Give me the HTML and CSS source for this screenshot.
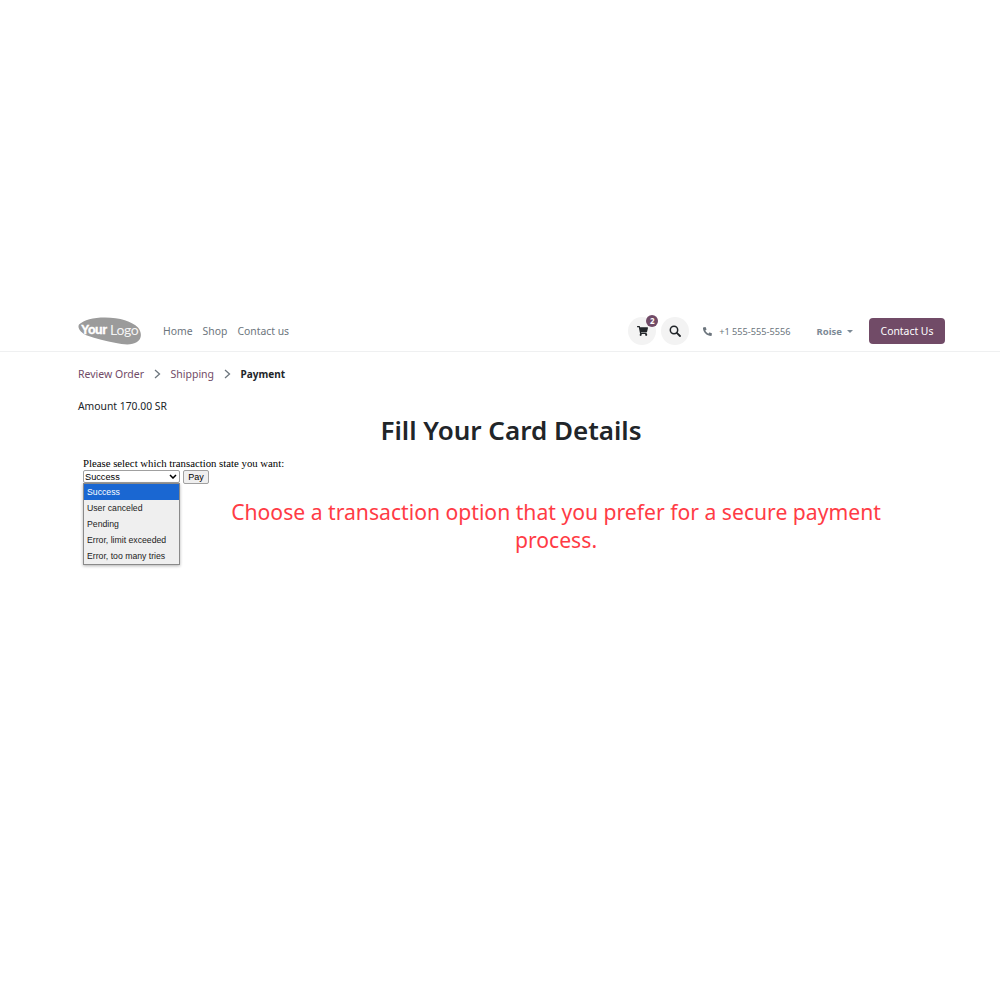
FILE: index.html
```html
<!DOCTYPE html>
<html lang="en">
<head>
<meta charset="utf-8">
<title>Payment</title>
<link rel="stylesheet" href="styles.css">
</head>
<body>
<div class="page">
  <header class="navbar">
    <a class="logo" aria-label="Your Logo">
      <svg width="64" height="28" viewBox="0 0 64 28">
        <path d="M1 7.500C6 3 15 .5 27 .5c15 0 27 4 33 10 4 5 4 11-1 14.500-5 3.500-14 2.500-21 1C28 24 18 22 9 18.500 3 16-1 11 1 7.500z" fill="#9b9b9b"/>
        <text x="3" y="17" class="logo-your">Your</text>
        <text x="32" y="18" class="logo-logo">Logo</text>
      </svg>
    </a>
    <nav class="menu">
      <a>Home</a>
      <a>Shop</a>
      <a>Contact us</a>
    </nav>
    <div class="tools">
      <span class="circle cart">
        <svg width="11" height="10" viewBox="0 0 576 512"><path fill="#212529" d="M528 301l47-208c3-15-8-29-23-29H159l-9-47C148 7 139 0 128 0H24C11 0 0 11 0 24v16c0 13 11 24 24 24h70l70 343c-17 10-28 28-28 49 0 31 25 56 56 56s56-25 56-56c0-16-6-30-17-40h210c-11 10-17 24-17 40 0 31 25 56 56 56s56-25 56-56c0-22-13-41-32-51l5-24c3-15-8-29-23-29H218l-6-32h293c11 0 21-8 23-19z"/></svg>
        <span class="badge">2</span>
      </span>
      <span class="circle">
        <svg width="12" height="12" viewBox="0 0 12 12"><circle cx="5" cy="5" r="3.700" fill="none" stroke="#212529" stroke-width="1.500"/><path d="M7.800 7.800L11 11" stroke="#212529" stroke-width="1.800" stroke-linecap="round"/></svg>
      </span>
      <span class="phone">
        <svg width="9" height="9" viewBox="0 0 512 512"><path transform="matrix(-1 0 0 1 512 0)" fill="#6c757d" d="M493 24L389 0c-11-3-23 3-27 14l-48 112c-4 10-1 21 7 28l61 50c-36 76-98 140-175 176l-50-61c-7-8-18-11-28-7L17 360c-11 5-17 17-14 28l24 104c3 11 12 19 23 19 257 0 466-208 466-466 0-11-8-20-23-21z"/></svg>
        <span>+1 555-555-5556</span>
      </span>
      <span class="user">Roise<i class="caret"></i></span>
      <a class="cta">Contact Us</a>
    </div>
  </header>
  <main class="content">
    <ol class="steps">
      <li class="step-link">Review Order</li>
      <li class="chev"><svg width="7" height="10" viewBox="0 0 7 10"><path d="M1 1l4.500 4L1 9" fill="none" stroke="#6c757d" stroke-width="1.300"/></svg></li>
      <li class="step-link">Shipping</li>
      <li class="chev"><svg width="7" height="10" viewBox="0 0 7 10"><path d="M1 1l4.500 4L1 9" fill="none" stroke="#6c757d" stroke-width="1.300"/></svg></li>
      <li class="step-current">Payment</li>
    </ol>
    <p class="amount">Amount 170.00 SR</p>
    <h1 class="title">Fill Your Card Details</h1>
    <div class="pay-row">
      <form class="mock-form">
        <div class="prompt">Please select which transaction state you want:</div>
        <div class="controls">
          <div class="select-wrap">
            <select class="state-select">
              <option>Success</option>
              <option>User canceled</option>
              <option>Pending</option>
              <option>Error, limit exceeded</option>
              <option>Error, too many tries</option>
            </select>
            <svg class="select-arrow" width="8" height="5" viewBox="0 0 8 5"><path d="M1 1l3 3 3-3" fill="none" stroke="#000" stroke-width="1.500"/></svg>
            <ul class="dropdown">
              <li class="selected">Success</li>
              <li>User canceled</li>
              <li>Pending</li>
              <li>Error, limit exceeded</li>
              <li>Error, too many tries</li>
            </ul>
          </div>
          <button class="pay" type="button">Pay</button>
        </div>
      </form>
      <p class="notice">Choose a transaction option that you prefer for a secure payment process.</p>
    </div>
  </main>
</div>
</body>
</html>
```

FILE: styles.css
```css
* { box-sizing: border-box; }
html, body { margin: 0; padding: 0; background: #fff; }
body { font-family: "Noto Sans", "Open Sans", sans-serif; color: #212529; }
.page { padding-top: 306px; min-height: 1000px; }

.navbar {
  display: flex;
  align-items: center;
  height: 46px;
  padding: 5px 55px 0 78px;
  border-bottom: 1px solid #eff0f1;
}
.logo { display: flex; width: 64px; height: 28px; }
.logo-your { font: 700 12.500px "Liberation Sans", sans-serif; fill: #fff; stroke: #fff; stroke-width: .35px; letter-spacing: -0.5px; }
.logo-logo { font: 400 14px "Lato", sans-serif; fill: #f4f4f4; letter-spacing: -0.3px; }
.menu { display: flex; gap: 10px; margin-left: 21px; font-size: 10.400px; color: #6c757d; }
.tools { display: flex; align-items: center; margin-left: auto; }
.circle {
  position: relative;
  display: flex;
  align-items: center;
  justify-content: center;
  width: 28px;
  height: 28px;
  border-radius: 50%;
  background: #f3f3f3;
}
.cart { margin-right: 5px; }
.badge {
  position: absolute;
  top: -2px;
  right: -2px;
  width: 12px;
  height: 12px;
  border-radius: 50%;
  background: #714b67;
  color: #fff;
  font-size: 8px;
  font-weight: 700;
  line-height: 12px;
  text-align: center;
}
.phone { display: flex; align-items: center; gap: 7px; margin-left: 14px; font-size: 9.200px; color: #6c757d; }
.user { display: flex; align-items: center; margin-left: 26px; font-size: 9.500px; font-weight: 700; color: #7c8a96; }
.caret { width: 0; height: 0; margin-left: 5px; border: 3px solid transparent; border-top-color: #7c8a96; border-bottom: 0; }
.cta {
  display: flex;
  align-items: center;
  justify-content: center;
  width: 76px;
  height: 26px;
  margin-left: 16px;
  border-radius: 4px;
  background: #714b67;
  color: #fff;
  font-size: 10.400px;
}

.content { padding: 0 78px; }
.steps { display: flex; align-items: center; list-style: none; margin: 13px 0 0; padding: 0; height: 17px; font-size: 10.500px; }
.step-link { color: #714b67; }
.step-current { font-weight: 700; font-size: 10px; }
.chev { display: flex; margin: 0 10px 0 9.500px; }
.amount { margin: 16px 0 0; font-size: 10.350px; line-height: 16px; }
.title { margin: -2px 0 0; padding-left: 22px; font-size: 26px; font-weight: 600; line-height: 36px; text-align: center; }
.pay-row { display: flex; align-items: flex-start; margin-top: 9px; }
.mock-form { flex: none; width: 123px; margin-left: 5px; font-family: "Liberation Serif", serif; font-size: 10.750px; line-height: 13px; white-space: nowrap; color: #000; }
.controls { display: flex; align-items: flex-start; gap: 3px; }
.select-wrap { position: relative; flex: none; width: 97px; height: 13px; }
.state-select {
  display: block;
  width: 97px;
  height: 13px;
  padding: 0 0 0 1px;
  appearance: none;
  font: 9.200px "Liberation Sans", sans-serif;
  background: #fff;
  border: 1px solid #a0a0a0;
  border-radius: 2px;
  color: #000;
}
.select-arrow { position: absolute; top: 4px; right: 3px; }
.dropdown {
  position: absolute;
  top: 13px;
  left: 0;
  width: 97px;
  margin: 0;
  padding: 0;
  list-style: none;
  background: #efefef;
  border: 1px solid #8a8a8a;
  box-shadow: 0 1px 3px rgba(0,0,0,.3);
  font: 8.700px/17px "Liberation Sans", sans-serif;
  color: #222;
}
.dropdown li { height: 16px; padding-left: 3px; }
.dropdown .selected { background: #1a67d2; color: #fff; }
.pay {
  flex: none;
  width: 26px;
  height: 14px;
  padding: 0;
  font: 9px "Liberation Sans", sans-serif;
  color: #000;
  background: #efefef;
  border: 1px solid #a0a0a0;
  border-radius: 2px;
}
.notice {
  flex: none;
  width: 700px;
  margin: 41px 0 0 0;
  padding: 0;
  font-size: 21.150px;
  line-height: 28px;
  text-align: center;
  color: #ff3b45;
}
```
